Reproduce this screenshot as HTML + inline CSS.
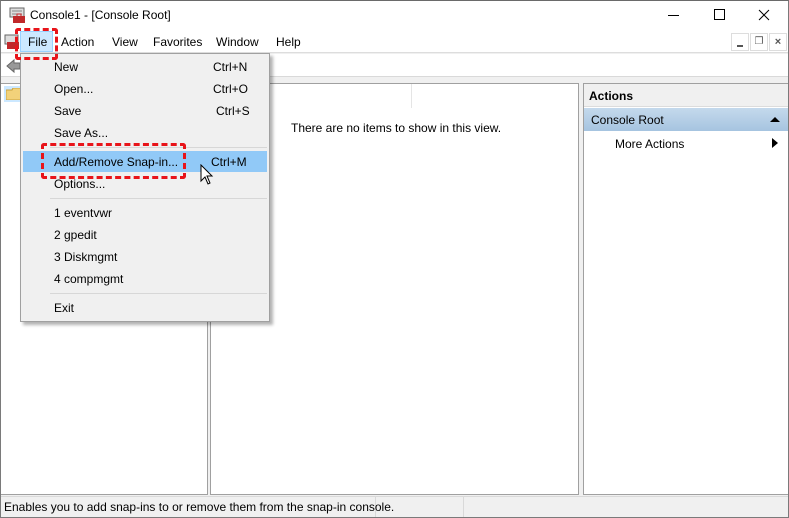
<!DOCTYPE html>
<html><head><meta charset="utf-8"><style>
*{margin:0;padding:0;box-sizing:border-box}
body{width:789px;height:518px;overflow:hidden;background:#f0f0f0;font-family:"Liberation Sans",sans-serif;font-size:12px;color:#000;position:relative}
.a{position:absolute}
</style></head><body>
<!-- window border -->
<div class="a" style="left:0;top:0;width:789px;height:518px;border:1px solid #7a7a7a;border-top:1px solid #6a6a6a"></div>
<!-- title bar -->
<div class="a" style="left:1px;top:1px;width:787px;height:29px;background:#fff"></div>
<svg class="a" style="left:9px;top:7px" width="18" height="17"><rect x="1" y="1" width="14" height="9" fill="#ddd" stroke="#666"/><line x1="3" y1="4" x2="13" y2="4" stroke="#888"/><line x1="3" y1="7" x2="13" y2="7" stroke="#888"/><rect x="4" y="9" width="12" height="7" fill="#c0282a"/><rect x="8" y="7" width="4" height="3" fill="none" stroke="#c0282a"/></svg>
<div class="a" style="left:30px;top:8px;font-size:12px">Console1 - [Console Root]</div>
<div class="a" style="left:668px;top:15px;width:11px;height:1px;background:#000"></div>
<div class="a" style="left:714px;top:9px;width:11px;height:11px;border:1px solid #000"></div>
<svg class="a" style="left:758px;top:9px" width="12" height="12"><path d="M1 1L11 11M11 1L1 11" stroke="#000" stroke-width="1"/></svg>
<!-- menu bar -->
<div class="a" style="left:1px;top:30px;width:787px;height:23px;background:#fff;border-bottom:1px solid #ddd"></div>
<svg class="a" style="left:4px;top:34px" width="16" height="16"><rect x="1" y="1" width="13" height="9" fill="#ddd" stroke="#666"/><rect x="3" y="8" width="12" height="7" fill="#c0282a"/></svg>
<div class="a" style="left:20px;top:31px;width:33px;height:21px;background:#cce8ff;border:1px solid #99d1ff"></div>
<div class="a" style="left:28px;top:35px">File</div>
<div class="a" style="left:61px;top:35px">Action</div>
<div class="a" style="left:112px;top:35px">View</div>
<div class="a" style="left:153px;top:35px">Favorites</div>
<div class="a" style="left:216px;top:35px">Window</div>
<div class="a" style="left:276px;top:35px">Help</div>
<div class="a" style="left:731px;top:33px;width:18px;height:18px;border:1px solid #ddd;background:#fff"><div class="a" style="left:5px;top:11px;width:6px;height:2px;background:#555"></div></div>
<div class="a" style="left:750px;top:33px;width:18px;height:18px;border:1px solid #ddd;background:#fff;font-size:10px;color:#555;text-align:center;line-height:16px">&#x2750;</div>
<div class="a" style="left:769px;top:33px;width:18px;height:18px;border:1px solid #ddd;background:#fff;font-size:11px;font-weight:bold;color:#555;text-align:center;line-height:16px">×</div>
<!-- toolbar -->
<div class="a" style="left:1px;top:54px;width:787px;height:23px;background:#fff;border-bottom:1px solid #d9d9d9"></div>
<svg class="a" style="left:5px;top:58px" width="16" height="16"><path d="M2 8L9 2V5H15V11H9V14Z" fill="#999" stroke="#666"/></svg>
<!-- panes -->
<div class="a" style="left:1px;top:83px;width:207px;height:412px;background:#fff;border:1px solid #a0a0a0;border-left:none"></div>
<div class="a" style="left:4px;top:86px;width:18px;height:16px;background:#cce8ff"></div>
<svg class="a" style="left:6px;top:88px" width="16" height="12"><path d="M0 2H6L7 0H15V12H0Z" fill="#f2d27a" stroke="#c9a13c"/></svg>
<div class="a" style="left:210px;top:83px;width:369px;height:412px;background:#fff;border:1px solid #a0a0a0"></div>
<div class="a" style="left:411px;top:84px;width:1px;height:24px;background:#e5e5e5"></div>
<div class="a" style="left:291px;top:121px">There are no items to show in this view.</div>
<div class="a" style="left:583px;top:83px;width:205px;height:412px;background:#fff;border:1px solid #a0a0a0;border-right:none"></div>
<div class="a" style="left:584px;top:84px;width:204px;height:23px;background:#f0f0f0;border-bottom:1px solid #dcdcdc"></div>
<div class="a" style="left:589px;top:89px;font-weight:bold">Actions</div>
<div class="a" style="left:584px;top:108px;width:204px;height:23px;background:linear-gradient(#c4d9ec,#a6c4e0)"></div>
<div class="a" style="left:591px;top:113px">Console Root</div>
<svg class="a" style="left:770px;top:116px" width="10" height="6"><path d="M0 6L5 1L10 6Z" fill="#000"/></svg>
<div class="a" style="left:615px;top:137px">More Actions</div>
<svg class="a" style="left:772px;top:138px" width="6" height="10"><path d="M0 0L6 5L0 10Z" fill="#000"/></svg>
<!-- status bar -->
<div class="a" style="left:1px;top:496px;width:787px;height:21px;background:#f0f0f0;border-top:1px solid #d9d9d9"></div>
<div class="a" style="left:375px;top:497px;width:1px;height:20px;background:#d9d9d9"></div>
<div class="a" style="left:463px;top:497px;width:1px;height:20px;background:#d9d9d9"></div>
<div class="a" style="left:4px;top:500px">Enables you to add snap-ins to or remove them from the snap-in console.</div>
<!-- dropdown menu -->
<div class="a" style="left:20px;top:53px;width:250px;height:269px;background:#f0f0f0;border:1px solid #a0a0a0;box-shadow:3px 3px 3px rgba(0,0,0,0.3)"></div>
<div class="a" style="left:50px;top:147px;width:217px;height:1px;background:#d7d7d7"></div>
<div class="a" style="left:23px;top:151px;width:244px;height:21px;background:#91c9f7"></div>
<div class="a" style="left:50px;top:198px;width:217px;height:1px;background:#d7d7d7"></div>
<div class="a" style="left:50px;top:293px;width:217px;height:1px;background:#d7d7d7"></div>
<div class="a" style="left:54px;top:60px">New</div><div class="a" style="left:213px;top:60px">Ctrl+N</div>
<div class="a" style="left:54px;top:82px">Open...</div><div class="a" style="left:213px;top:82px">Ctrl+O</div>
<div class="a" style="left:54px;top:104px">Save</div><div class="a" style="left:216px;top:104px">Ctrl+S</div>
<div class="a" style="left:54px;top:126px">Save As...</div>
<div class="a" style="left:54px;top:155px">Add/Remove Snap-in...</div><div class="a" style="left:211px;top:155px">Ctrl+M</div>
<div class="a" style="left:54px;top:177px">Options...</div>
<div class="a" style="left:54px;top:206px">1 eventvwr</div>
<div class="a" style="left:54px;top:228px">2 gpedit</div>
<div class="a" style="left:54px;top:250px">3 Diskmgmt</div>
<div class="a" style="left:54px;top:272px">4 compmgmt</div>
<div class="a" style="left:54px;top:301px">Exit</div>
<!-- red dashed highlights -->
<div class="a" style="left:15px;top:28px;width:43px;height:32px;border:3px dashed #e8141a;border-radius:3px"></div>
<div class="a" style="left:41px;top:143px;width:145px;height:36px;border:3px dashed #e8141a;border-radius:3px"></div>
<!-- cursor -->
<svg class="a" style="left:200px;top:164px" width="14" height="22"><path d="M1 1V17L5 13L8 20L10 19L7 12H12Z" fill="#fff" stroke="#000"/></svg>
</body></html>
